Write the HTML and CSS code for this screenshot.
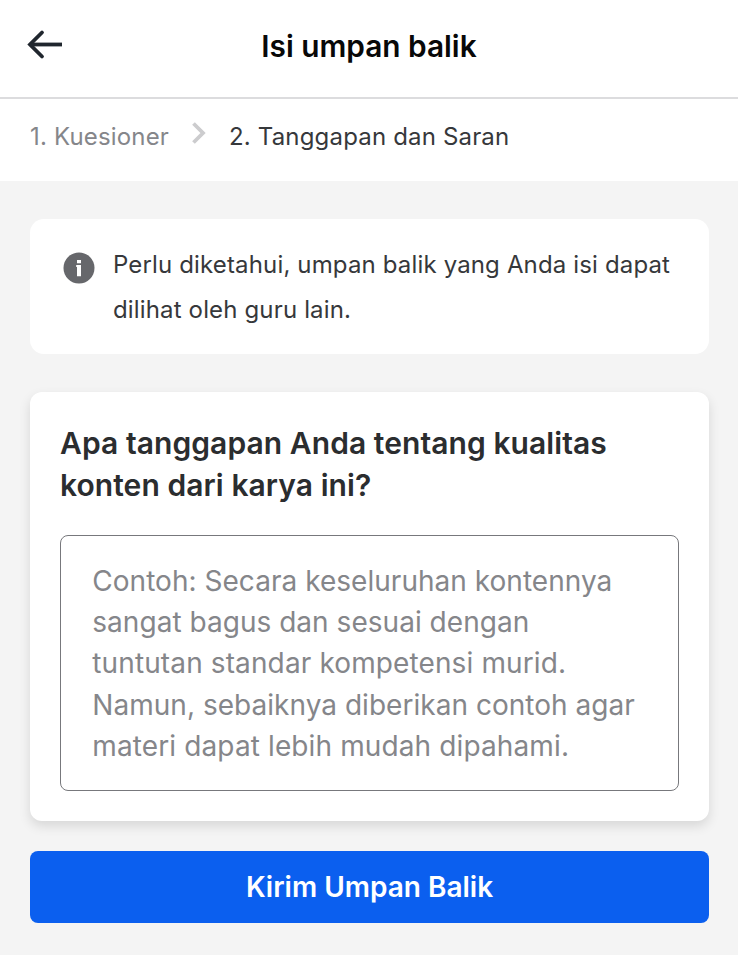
FILE: index.html
```html
<!DOCTYPE html>
<html lang="id">
<head>
<meta charset="utf-8">
<title>Isi umpan balik</title>
<link rel="stylesheet" href="styles.css">
</head>
<body>
<header class="topbar">
  <svg class="back" width="36" height="32" viewBox="0 0 36 32"><path d="M15 4.500 3 16.500 15 28.500" stroke-linecap="round"/><path d="M3 16.500H35"/></svg>
  <h1>Isi umpan balik</h1>
</header>
<nav class="steps">
  <span class="step-done">1. Kuesioner</span>
  <svg class="chevron" width="14" height="24" viewBox="0 0 14 24"><path d="M1.500 2.500 11 12 1.500 21.500"/></svg>
  <span class="step-current">2. Tanggapan dan Saran</span>
</nav>
<main>
  <section class="notice">
    <svg class="info" width="32" height="32" viewBox="0 0 32 32"><circle cx="16" cy="16" r="15.500"/><path d="M14 8h4v3.300h-4zM13.200 13h4.800v11.200h-4v-9.200h-.8z"/></svg>
    <p>Perlu diketahui, umpan balik yang Anda isi dapat<br>dilihat oleh guru lain.</p>
  </section>
  <section class="card">
    <h2>Apa tanggapan Anda tentang kualitas<br>konten dari karya ini?</h2>
    <div class="field">Contoh: Secara keseluruhan kontennya<br>sangat bagus dan sesuai dengan<br><span class="wide">tuntutan standar kompetensi murid.</span><br>Namun, sebaiknya diberikan contoh agar<br><span class="wide">materi dapat lebih mudah dipahami.</span></div>
  </section>
  <button class="submit">Kirim Umpan Balik</button>
</main>
</body>
</html>
```
FILE: styles.css
```css
* { box-sizing: border-box; }
body { margin: 0; font-family: Inter, sans-serif; background: #f4f4f4; color: #36383b; }
h1, h2, p { margin: 0; }
.topbar { height: 99px; padding: 0 27px 9px; background: #fff; border-bottom: 2px solid #dcdcde; display: grid; grid-template-columns: 36px 1fr 36px; align-items: center; }
.back path { fill: none; stroke: #20262e; stroke-width: 3.800; }
h1 { font-size: 29.800px; line-height: 36px; font-weight: 600; text-align: center; color: #080808; white-space: nowrap; padding-top: 3px; }
.steps { height: 82px; padding: 0 30px 8px; background: #fff; display: flex; align-items: center; font-size: 24px; letter-spacing: .17px; white-space: nowrap; }
.step-done { color: #85868a; width: 162px; }
.chevron { margin: -6px 23px 0 0; }
.chevron path { fill: none; stroke: #ccccce; stroke-width: 3.800; }
main { padding: 38px 30px 0; width: 738px; }
.notice { height: 135px; background: #fff; border-radius: 14px; padding: 23px 33px; display: flex; gap: 18px; width: 679px; }
.info { margin-top: 10px; flex: none; fill: #66676b; }
.info path { fill: #fff; }
.notice p { font-size: 24px; line-height: 45px; letter-spacing: .15px; white-space: nowrap; }
.card { margin-top: 38px; width: 679px; height: 429px; background: #fff; border-radius: 12px; padding: 30px; box-shadow: 0 5px 12px rgba(0,0,0,.12); white-space: nowrap; }
h2 { font-size: 30px; line-height: 42px; font-weight: 600; letter-spacing: .07px; color: #2b2d2f; }
.field { margin: 29px 0 0; width: 619px; height: 256px; border: 1.500px solid #77787c; border-radius: 8px; padding: 24.500px 31.300px; font-size: 28px; line-height: 41.400px; letter-spacing: .03px; color: #85868a; }
.wide { letter-spacing: .12px; }
.submit { display: block; margin-top: 30px; width: 679px; height: 72px; border: 0; border-radius: 8px; background: #0b5fef; color: #fff; font: 600 28px Inter, sans-serif; }
```
